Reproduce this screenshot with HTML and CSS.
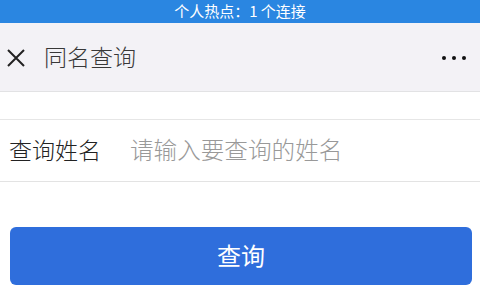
FILE: index.html
```html
<!DOCTYPE html>
<html lang="zh">
<head>
<meta charset="utf-8">
<link rel="stylesheet" href="styles.css">
</head>
<body>
<div class="status">个人热点：1 个连接</div>
<div class="nav">
  <svg class="close" width="20" height="20" viewBox="0 0 20 20"><path d="M2 2 L18 18 M18 2 L2 18" stroke="#222" stroke-width="2" fill="none"/></svg>
  <div class="title">同名查询</div>
  <div class="more"><span></span><span></span><span></span></div>
</div>
<div class="gap"></div>
<div class="row">
  <div class="label">查询姓名</div>
  <div class="placeholder">请输入要查询的姓名</div>
</div>
<div class="btn-wrap"><div class="btn">查询</div></div>
</body>
</html>
```
FILE: styles.css
```css
html, body { margin: 0; padding: 0; background: #fff; }
body { width: 480px; height: 300px; overflow: hidden; font-family: "Noto Sans CJK SC", "Noto Sans", sans-serif; }
.status { height: 23px; background: #2a86e1; color: #fff; font-size: 15px; line-height: 22px; text-align: center; }
.nav { height: 68px; background: #f3f2f6; border-bottom: 1px solid #e2e2e4; display: flex; align-items: center; padding: 0 14px 0 6px; }
.close { flex: none; margin-top: 1px; }
.title { margin-left: 18px; font-size: 23px; color: #383838; flex: 1; font-weight: 300; padding-bottom: 2px; }
.more { display: flex; gap: 6px; padding-top: 1px; }
.more span { width: 4px; height: 4px; border-radius: 50%; background: #111; }
.gap { height: 27px; border-bottom: 1px solid #e6e6e6; }
.row { display: flex; align-items: center; border-bottom: 1px solid #e3e3e3; padding-left: 9px; padding-bottom: 4px; box-sizing: border-box; height: 62px; }
.label { font-size: 23px; color: #222; width: 121px; font-weight: 300; }
.placeholder { font-size: 23.6px; color: #999; font-weight: 300; }
.btn-wrap { padding: 45px 8px 0 10px; }
.btn { height: 58px; border-radius: 6px; background: #2f6edc; color: #fff; font-size: 24px; display: flex; align-items: center; justify-content: center; padding-bottom: 4px; box-sizing: border-box; }
```
